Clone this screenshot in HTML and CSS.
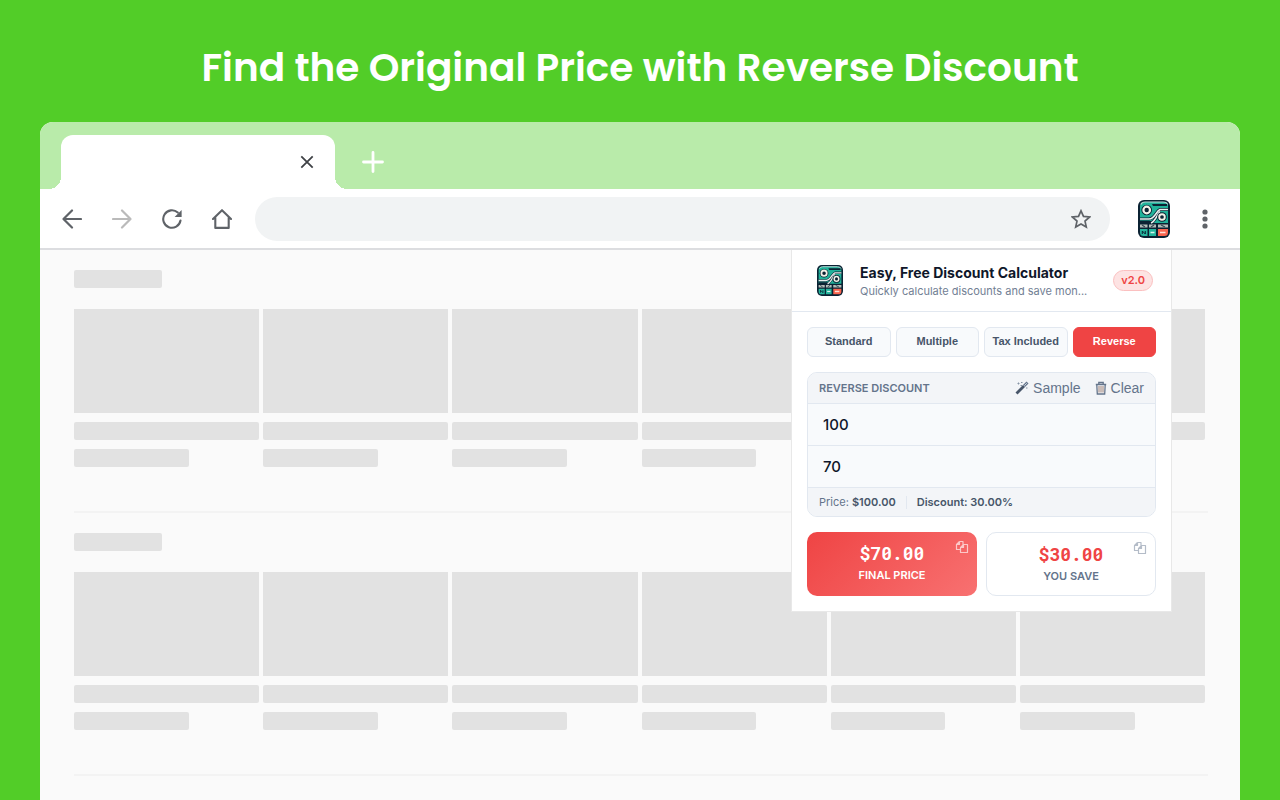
FILE: index.html
```html
<!DOCTYPE html>
<html lang="en">
<head>
<meta charset="utf-8">
<meta name="viewport" content="width=device-width, initial-scale=1">
<title>Easy, Free Discount Calculator</title>
<link rel="stylesheet" href="styles.css">
</head>
<body>
<svg class="defs" aria-hidden="true">
  <symbol id="logo" viewBox="0 0 32 38">
    <rect x="0" y="0" width="32" height="38" rx="6" fill="#0b2233"/>
    <path d="M2 6q0-4 4-4h20q4 0 4 4v17H2z" fill="#20b29a"/>
    <path d="M3 4.500q1-2.500 4-2.500h18q4 0 4.500 2.500" fill="none" stroke="#b9d8d6" stroke-width="1.200"/>
    <path d="M14 4h15v2H15z" fill="#0b2233"/>
    <path d="M2 19h9c6 0 7-8 11-9.500h8M2 22.500h11c4 0 6-8 9-11" fill="none" stroke="#0b2233" stroke-width="3"/>
    <path d="M2 19h9c6 0 7-8 11-9.500h8M13 23c4-1 6-8 9-11.500" fill="none" stroke="#e8f1ef" stroke-width="1.600"/>
    <circle cx="8.700" cy="10" r="5.300" fill="#0b2233"/>
    <circle cx="8.700" cy="10" r="3.300" fill="#0b2233" stroke="#f2f2e8" stroke-width="2.200"/>
    <circle cx="24" cy="17" r="4.800" fill="#0b2233"/>
    <circle cx="24" cy="17" r="2.800" fill="#0b2233" stroke="#f2f2e8" stroke-width="1.900"/>
    <path d="M2 24.500h7.500v3H2zM11 24.500h7v3h-7zM20 24.500h10v3H20z" fill="#b3bcb8"/>
    <path d="M4 25l3 2M13 27l3-2M23 25l4 2" stroke="#334b55" stroke-width="1.200"/>
    <path d="M2 29h7.500v7H5.500q-3.500 0-3.500-3.500zM11 29h7v7h-7z" fill="#24b59d"/>
    <path d="M20 29h10v3.500q0 3.500-3.500 3.500H20z" fill="#f9654f"/>
    <path d="M4.300 34v-3l3 3v-3" stroke="#0b2233" fill="none"/>
    <path d="M12.500 32.500h4" stroke="#d9f3ec" stroke-width="1.500"/>
    <path d="M22 32.500h5.500" stroke="#ffe1d9" stroke-width="1.700"/>
  </symbol>
  <symbol id="copy" viewBox="0 0 14 14">
    <path d="M4.500 1.500H8v3M4.500 1.500L1.500 4.500v5h4M4.500 1.500v3h-3M8.500 4.500h4v8h-7v-5zM8.500 4.500v3h-3" fill="none" stroke="currentColor" stroke-width="1.200" stroke-linejoin="round"/>
  </symbol>
</svg>
<h1 class="headline">Find the Original Price with Reverse Discount</h1>
<main class="browser">
  <div class="tabstrip">
    <div class="tab">
      <button class="icon-btn" type="button" aria-label="Close tab"><svg width="14" height="14" viewBox="0 0 14 14"><path d="M1.300 1.300l11.400 11.400M12.700 1.300l-11.400 11.400" stroke="#3f4246" stroke-width="1.800"/></svg></button>
    </div>
    <button class="icon-btn new-tab" type="button" aria-label="New tab"><svg width="22" height="22" viewBox="0 0 22 22"><path d="M11 1.500v19M1.500 11h19" stroke="#fff" stroke-width="2.800" stroke-linecap="round"/></svg></button>
  </div>
  <div class="toolbar">
    <div class="nav">
      <button class="icon-btn" type="button" aria-label="Back"><svg width="20" height="20" viewBox="0 0 20 20"><path d="M19 10H1.500M10 1.500L1.500 10l8.500 8.500" fill="none" stroke="#5f6368" stroke-width="2.200" stroke-linecap="round" stroke-linejoin="round"/></svg></button>
      <button class="icon-btn" type="button" aria-label="Forward"><svg width="20" height="20" viewBox="0 0 20 20"><path d="M1 10h17.500M10 1.500l8.500 8.500-8.500 8.500" fill="none" stroke="#bababa" stroke-width="2.200" stroke-linecap="round" stroke-linejoin="round"/></svg></button>
      <button class="icon-btn" type="button" aria-label="Reload"><svg width="20" height="20" viewBox="0 0 20 20"><path d="M18.500 11.500A8.700 8.700 0 1 1 15.800 3.600" fill="none" stroke="#5f6368" stroke-width="2.100" stroke-linecap="round"/><path d="M19.600 1v7h-7z" fill="#5f6368"/></svg></button>
      <button class="icon-btn" type="button" aria-label="Home"><svg width="20" height="20" viewBox="0 0 20 20"><path d="M1 10l9-8.800L19 10M3.300 8.500v10.400h13.400V8.500" fill="none" stroke="#5f6368" stroke-width="2.100" stroke-linecap="round" stroke-linejoin="round"/></svg></button>
    </div>
    <div class="address">
      <input type="text" aria-label="Address">
      <button class="icon-btn" type="button" aria-label="Bookmark"><svg width="20" height="20" viewBox="0 0 20 20"><path d="M10 1.800l2.500 5.600 6.100.6-4.600 4.100 1.300 6L10 15l-5.300 3.100 1.300-6L1.400 8l6.100-.6z" fill="none" stroke="#5f6368" stroke-width="1.700"/></svg></button>
    </div>
    <button class="icon-btn extension" type="button" aria-label="Discount calculator"><svg width="32" height="38"><use href="#logo"/></svg></button>
    <button class="icon-btn" type="button" aria-label="Menu"><svg width="6" height="20" viewBox="0 0 6 20"><g fill="#5f6368"><circle cx="3" cy="3" r="2.600"/><circle cx="3" cy="10" r="2.600"/><circle cx="3" cy="17" r="2.600"/></g></svg></button>
  </div>
  <div class="page">
    <section class="shelf">
      <div class="bone title"></div>
      <div class="cards">
        <div class="card"><i class="thumb"></i><i class="bone"></i><i class="bone short"></i></div>
        <div class="card"><i class="thumb"></i><i class="bone"></i><i class="bone short"></i></div>
        <div class="card"><i class="thumb"></i><i class="bone"></i><i class="bone short"></i></div>
        <div class="card"><i class="thumb"></i><i class="bone"></i><i class="bone short"></i></div>
        <div class="card"><i class="thumb"></i><i class="bone"></i><i class="bone short"></i></div>
        <div class="card"><i class="thumb"></i><i class="bone"></i><i class="bone short"></i></div>
      </div>
    </section>
    <section class="shelf">
      <div class="bone title"></div>
      <div class="cards">
        <div class="card"><i class="thumb"></i><i class="bone"></i><i class="bone short"></i></div>
        <div class="card"><i class="thumb"></i><i class="bone"></i><i class="bone short"></i></div>
        <div class="card"><i class="thumb"></i><i class="bone"></i><i class="bone short"></i></div>
        <div class="card"><i class="thumb"></i><i class="bone"></i><i class="bone short"></i></div>
        <div class="card"><i class="thumb"></i><i class="bone"></i><i class="bone short"></i></div>
        <div class="card"><i class="thumb"></i><i class="bone"></i><i class="bone short"></i></div>
      </div>
    </section>
    <aside class="popup">
      <header class="popup-head">
        <svg class="popup-logo" width="26" height="31"><use href="#logo"/></svg>
        <div class="popup-titles">
          <h2>Easy, Free Discount Calculator</h2>
          <p>Quickly calculate discounts and save mon...</p>
        </div>
        <span class="version">v2.0</span>
      </header>
      <div class="popup-body">
        <nav class="modes">
          <button type="button">Standard</button>
          <button type="button">Multiple</button>
          <button type="button">Tax Included</button>
          <button type="button" class="active">Reverse</button>
        </nav>
        <form class="calc">
          <div class="calc-head">
            <h3>Reverse Discount</h3>
            <button type="button"><svg width="14" height="14" viewBox="0 0 14 14"><path d="M1.500 12.500L9 5" stroke="#475569" stroke-width="2.800"/><path d="M9 5l3.500-3.500" stroke="#64748b" stroke-width="2.800"/><path d="M9.300 4.700l2.500-2.500" stroke="#e8edf2" stroke-width=".8"/><path d="M2.500 2.500h2M3.500 1.500v2M6 1.500h1.500M5.500 4.500h1.500M11 7h1.500" stroke="#8794a6" stroke-width="1"/></svg>Sample</button>
            <button type="button"><svg width="12" height="14" viewBox="0 0 12 14"><path d="M.8 3.500h10.400M3.800 3V1.500h4.400V3M1.800 4l.5 9h7.400l.5-9" fill="none" stroke="#64748b" stroke-width="1.300"/><path d="M4 5v6.500M6 5v6.500M8 5v6.500" stroke="#a08378" stroke-width="1"/></svg>Clear</button>
          </div>
          <input type="text" aria-label="Original price" value="100">
          <input type="text" aria-label="Discounted price" value="70">
          <div class="summary">
            <span>Price: <b>$100.00</b></span>
            <span class="rule"></span>
            <b>Discount: 30.00%</b>
          </div>
        </form>
        <div class="results">
          <div class="result primary">
            <output>$70.00</output>
            <span>Final price</span>
            <button class="copy" type="button" aria-label="Copy final price"><svg width="14" height="14"><use href="#copy"/></svg></button>
          </div>
          <div class="result">
            <output>$30.00</output>
            <span>You save</span>
            <button class="copy" type="button" aria-label="Copy savings"><svg width="14" height="14"><use href="#copy"/></svg></button>
          </div>
        </div>
      </div>
    </aside>
  </div>
</main>
</body>
</html>
```

FILE: styles.css
```css
* { box-sizing: border-box; }

body {
  margin: 0;
  height: 100vh;
  overflow: hidden;
  display: flex;
  flex-direction: column;
  background: #52cd28;
  font-family: Inter, "Liberation Sans", sans-serif;
}

h1, h2, h3, p { margin: 0; }
button { font: inherit; cursor: pointer; }
svg { display: block; flex: none; }
.defs { position: absolute; width: 0; height: 0; }

.headline {
  padding: 38px 20px 24px;
  color: #fff;
  font-family: Poppins, Inter, sans-serif;
  font-size: 39px;
  font-weight: 600;
  line-height: 60px;
  text-align: center;
  white-space: nowrap;
}

.icon-btn {
  display: flex;
  padding: 0;
  border: 0;
  background: none;
}

.browser {
  flex: 1;
  min-height: 0;
  margin: 0 40px;
  display: flex;
  flex-direction: column;
  overflow: hidden;
  border-radius: 13px 13px 0 0;
  background: #fafafa;
}

.tabstrip {
  display: flex;
  align-items: center;
  gap: 27px;
  height: 67px;
  padding: 13px 21px 0;
  background: #b9ebaa;
}

.tab {
  position: relative;
  display: flex;
  align-items: center;
  justify-content: flex-end;
  width: 274px;
  height: 54px;
  padding-right: 21px;
  border-radius: 12px 12px 0 0;
  background: #fff;
}

.tab::before,
.tab::after {
  content: "";
  position: absolute;
  bottom: 0;
  width: 12px;
  height: 12px;
}

.tab::before {
  right: 100%;
  background: radial-gradient(circle at 0 0, transparent 12px, #fff 12px);
}

.tab::after {
  left: 100%;
  background: radial-gradient(circle at 100% 0, transparent 12px, #fff 12px);
}

.toolbar {
  display: flex;
  align-items: center;
  height: 61px;
  padding: 1px 32px 0 22px;
  border-bottom: 2px solid #dcdde0;
  background: #fff;
}

.nav { display: flex; gap: 30px; }

.address {
  flex: 1;
  display: flex;
  align-items: center;
  height: 44px;
  margin-left: 23px;
  padding-right: 19px;
  border-radius: 22px;
  background: #f1f3f4;
}

.address input {
  flex: 1;
  height: 100%;
  padding: 0 22px;
  border: 0;
  background: none;
}

.extension { margin: 0 32px 0 28px; }

.page {
  position: relative;
  flex: 1;
  padding: 0 32px 0 34px;
}

.shelf {
  padding-top: 20px;
  border-bottom: 2px solid #f3f3f3;
}

.bone {
  display: block;
  height: 18px;
  border-radius: 2px;
  background: #e2e2e2;
}

.title { width: 88px; }

.cards {
  display: grid;
  grid-template-columns: repeat(6, 1fr);
  gap: 4px;
  padding: 21px 3px 44px 0;
}

.card {
  display: flex;
  flex-direction: column;
  gap: 9px;
}

.thumb { height: 104px; background: #e2e2e2; }
.short { width: 62%; }

.popup {
  position: absolute;
  top: 0;
  right: 68px;
  width: 381px;
  border: 1px solid #e8e8e8;
  border-top: 0;
  background: #fff;
}

.popup-head {
  display: flex;
  align-items: center;
  padding: 12px 18px 12px 25px;
  border-bottom: 1px solid #e2e8f0;
}

.popup-titles {
  flex: 1;
  min-width: 0;
  margin: 0 4px 0 17px;
  white-space: nowrap;
}

.popup-titles h2 {
  color: #0f172a;
  font-size: 14px;
  font-weight: 700;
  line-height: 21px;
}

.popup-titles p {
  color: #728094;
  font-size: 11px;
  line-height: 16px;
}

.version {
  padding: 0 7px;
  border: 1px solid #fbc0c0;
  border-radius: 11px;
  background: #fde3e3;
  color: #ef4444;
  font-size: 11px;
  font-weight: 600;
  line-height: 19px;
}

.popup-body {
  display: flex;
  flex-direction: column;
  gap: 15px;
  padding: 15px;
}

.modes {
  display: grid;
  grid-template-columns: repeat(4, 1fr);
  gap: 5px;
}

.modes button {
  height: 30px;
  padding: 0 0 2px;
  border: 1px solid #e2e8f0;
  border-radius: 6px;
  background: #f8fafc;
  color: #475569;
  font-family: "Liberation Sans", Arial, sans-serif;
  font-size: 11px;
  font-weight: 600;
  white-space: nowrap;
}

.modes .active {
  border-color: #ef4444;
  background: #ef4444;
  color: #fff;
}

.calc {
  overflow: hidden;
  border: 1px solid #e2e8f0;
  border-radius: 10px;
  background: #f8fafc;
}

.calc-head {
  display: flex;
  align-items: center;
  gap: 14px;
  height: 31px;
  padding: 0 11px;
  border-bottom: 1px solid #e2e8f0;
  background: #f3f5f8;
}

.calc-head h3 {
  flex: 1;
  color: #64748b;
  font-size: 11px;
  font-weight: 600;
  text-transform: uppercase;
}

.calc-head button {
  display: flex;
  align-items: center;
  gap: 4px;
  padding: 0;
  border: 0;
  background: none;
  color: #64748b;
  font-family: "Liberation Sans", Arial, sans-serif;
  font-size: 14px;
}

.calc input {
  display: block;
  width: 100%;
  height: 42px;
  padding: 0 15px;
  border: 0;
  border-bottom: 1px solid #e2e8f0;
  background: #f8fafc;
  color: #0f172a;
  font: 500 15px Inter, sans-serif;
}

.summary {
  display: flex;
  align-items: center;
  gap: 10px;
  height: 28px;
  padding: 0 11px;
  background: #f3f5f8;
  color: #64748b;
  font-size: 11px;
}

.summary b { color: #475569; font-weight: 600; }
.rule { width: 1px; height: 13px; background: #e2e8f0; }

.results {
  display: grid;
  grid-template-columns: 1fr 1fr;
  gap: 9px;
}

.result {
  position: relative;
  display: flex;
  flex-direction: column;
  align-items: center;
  justify-content: center;
  height: 64px;
  padding-top: 2px;
  border: 1px solid #e2e8f0;
  border-radius: 10px;
  background: #fff;
  color: #64748b;
  font-size: 11px;
  font-weight: 600;
  line-height: 22px;
  text-transform: uppercase;
}

.result output {
  color: #ef4444;
  font-family: "Roboto Mono", "DejaVu Sans Mono", monospace;
  font-size: 18px;
  font-weight: 700;
  line-height: 22px;
}

.primary {
  border: 0;
  padding-top: 0;
  background: linear-gradient(135deg, #ef4444, #f87171);
  color: #fff;
}

.primary output { color: #fff; }

.copy {
  position: absolute;
  top: 8px;
  right: 8px;
  padding: 0;
  border: 0;
  background: none;
  color: #b4bcc8;
}

.primary .copy { color: #fcc8c8; }
```
